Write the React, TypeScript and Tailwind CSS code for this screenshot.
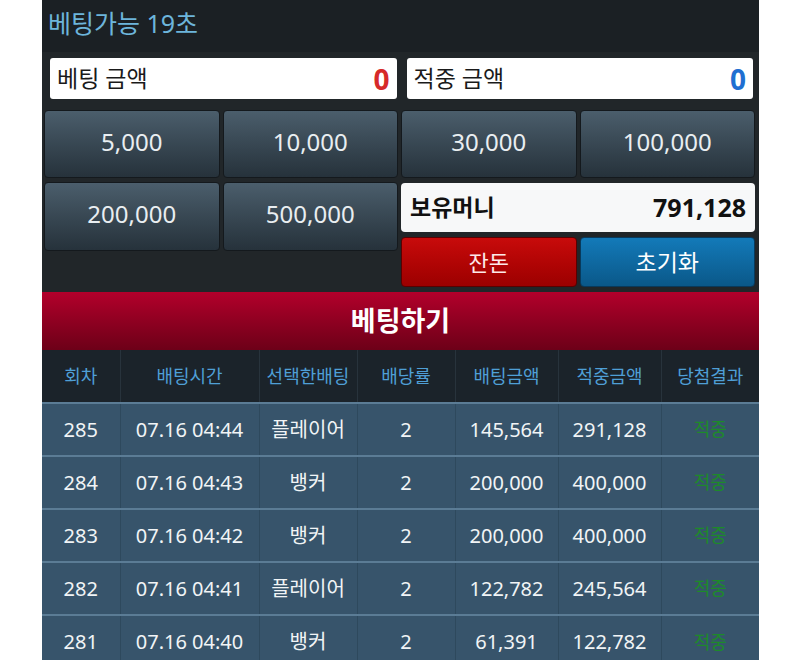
import React from "react";

type BetRow = {
  round: number;
  time: string;
  pick: string;
  odds: number;
  bet: string;
  win: string;
  result: string;
};

const rows: BetRow[] = [
  { round: 285, time: "07.16 04:44", pick: "플레이어", odds: 2, bet: "145,564", win: "291,128", result: "적중" },
  { round: 284, time: "07.16 04:43", pick: "뱅커", odds: 2, bet: "200,000", win: "400,000", result: "적중" },
  { round: 283, time: "07.16 04:42", pick: "뱅커", odds: 2, bet: "200,000", win: "400,000", result: "적중" },
  { round: 282, time: "07.16 04:41", pick: "플레이어", odds: 2, bet: "122,782", win: "245,564", result: "적중" },
  { round: 281, time: "07.16 04:40", pick: "뱅커", odds: 2, bet: "61,391", win: "122,782", result: "적중" },
];

const chips = ["5,000", "10,000", "30,000", "100,000", "200,000", "500,000"];

function Chip({ label, tall }: { label: string; tall?: boolean }) {
  return (
    <button
      className={`flex items-center justify-center rounded-[4px] border border-[#14191d] bg-gradient-to-b from-[#4b5e6c] to-[#26323b] pb-[5px] text-[24px] text-[#e9eef1] ${
        tall ? "h-[69px]" : "h-[68px]"
      }`}
    >
      {label}
    </button>
  );
}

export default function App() {
  return (
    <div className="h-[660px] w-full overflow-hidden bg-white font-['Noto_Sans','Noto_Sans_CJK_KR',sans-serif]">
      <div className="ml-[42px] w-[717px] bg-[#212629]">
        <div className="flex h-[52px] items-center bg-[#1b2024] px-[6px] pb-[5px] text-[25px] text-[#6db5db]">
          베팅가능 19초
        </div>

        <div className="grid grid-cols-2 gap-[10px] pl-[8px] pr-[6px] pt-[6px]">
          <div className="flex h-[41px] items-center justify-between rounded-[3px] bg-white px-[7px]">
            <span className="text-[23px] text-[#1a1a1a]">베팅 금액</span>
            <span className="text-[28px] font-bold text-[#d62a2a]">0</span>
          </div>
          <div className="flex h-[41px] items-center justify-between rounded-[3px] bg-white px-[7px]">
            <span className="text-[23px] text-[#1a1a1a]">적중 금액</span>
            <span className="text-[28px] font-bold text-[#1f6fd1]">0</span>
          </div>
        </div>

        <div className="mt-[11px] grid grid-cols-4 gap-x-[3px] pl-[2px] pr-[4px]">
          {chips.slice(0, 4).map((c) => (
            <Chip key={c} label={c} />
          ))}
        </div>

        <div className="mt-[4px] grid grid-cols-4 items-start gap-x-[3px] pl-[2px] pr-[4px]">
          {chips.slice(4).map((c) => (
            <Chip key={c} label={c} tall />
          ))}
          <div className="col-span-2 mt-[1px] flex flex-col">
            <div className="flex h-[49px] items-center justify-between rounded-[4px] bg-[#f7f8f9] px-[9px] font-bold text-[#111]">
              <span className="text-[23px]">보유머니</span>
              <span className="text-[25px]">791,128</span>
            </div>
            <div className="mt-[5px] grid grid-cols-2 gap-x-[3px]">
              <button className="flex h-[50px] items-center justify-center rounded-[4px] border border-[#5a0000] bg-gradient-to-b from-[#c80b0b] to-[#9c0000] text-[22px] text-[#fde9e9]">
                잔돈
              </button>
              <button className="flex h-[50px] items-center justify-center rounded-[4px] border border-[#083a5c] bg-gradient-to-b from-[#137ab9] to-[#0a5889] text-[23px] text-white">
                초기화
              </button>
            </div>
          </div>
        </div>

        <button className="mt-[5px] flex h-[58px] w-full items-center justify-center bg-gradient-to-b from-[#b3002b] to-[#6d0018] text-[27px] font-bold text-white">
          베팅하기
        </button>

        <table className="w-full table-fixed border-collapse text-center">
          <colgroup>
            <col className="w-[78px]" />
            <col className="w-[139px]" />
            <col className="w-[98px]" />
            <col className="w-[98px]" />
            <col className="w-[103px]" />
            <col className="w-[103px]" />
            <col className="w-[98px]" />
          </colgroup>
          <thead>
            <tr className="h-[53px] bg-[#1b232a] text-[18px] font-normal text-[#4f9fd6]">
              {["회차", "배팅시간", "선택한배팅", "배당률", "배팅금액", "적중금액", "당첨결과"].map((h, i) => (
                <th
                  key={h}
                  className={`whitespace-nowrap font-normal ${i > 0 ? "border-l border-[#28333c]" : ""}`}
                >
                  {h}
                </th>
              ))}
            </tr>
          </thead>
          <tbody>
            {rows.map((r) => (
              <tr key={r.round} className="h-[53px] border-t-2 border-[#5b7c95] bg-[#37546b] text-[20px] text-[#f1f4f6]">
                <td>{r.round}</td>
                <td className="whitespace-nowrap border-l border-[#2e495d]">{r.time}</td>
                <td className="border-l border-[#2e495d]">{r.pick}</td>
                <td className="border-l border-[#2e495d]">{r.odds}</td>
                <td className="border-l border-[#2e495d]">{r.bet}</td>
                <td className="border-l border-[#2e495d]">{r.win}</td>
                <td className="border-l border-[#2e495d] text-[18px] text-[#1d8a2a]">{r.result}</td>
              </tr>
            ))}
          </tbody>
        </table>
      </div>
    </div>
  );
}
